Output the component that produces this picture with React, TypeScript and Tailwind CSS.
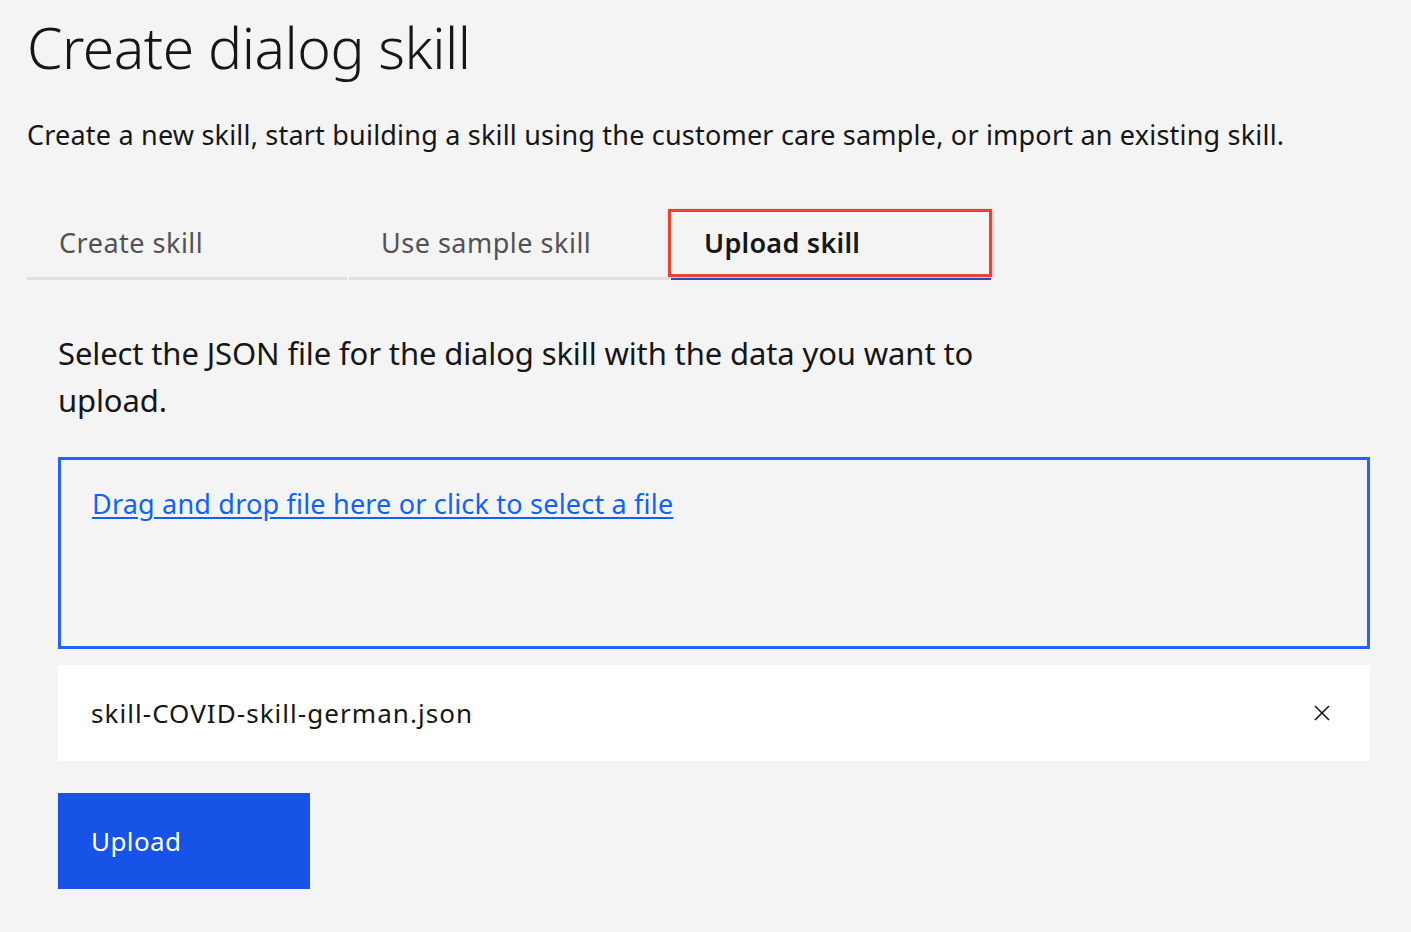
export default function App() {
  return (
    <div className="min-h-screen bg-[#f4f4f4] font-['Noto_Sans','Open_Sans',sans-serif] text-[#161616]">
      <div className="px-[27px] pt-[15px]">
        <h1 className="text-[57px] leading-[64px] font-light tracking-[-0.5px]">Create dialog skill</h1>

        <p className="mt-[38px] text-[27px] leading-[36px] tracking-[0.2px] text-[#161616]">
          Create a new skill, start building a skill using the customer care sample, or import an existing skill.
        </p>

        {/* Tabs */}
        <div className="mt-[56px] flex gap-[2px]">
          <div className="flex h-[71px] w-[320px] items-center border-b-[3px] border-[#e0e0e0] pl-[32px] text-[27px] tracking-[0.5px] text-[#525252]">
            Create skill
          </div>
          <div className="flex h-[71px] w-[320px] items-center border-b-[3px] border-[#e0e0e0] pl-[32px] text-[27px] tracking-[0.5px] text-[#525252]">
            Use sample skill
          </div>
          <div className="relative flex h-[71px] w-[320px] items-center border-b-[2px] border-[#2f4fd6] pl-[33px] text-[27px] font-semibold tracking-[0.25px] text-[#161616]">
            Upload skill
            <span className="pointer-events-none absolute top-0 right-[-1px] bottom-[1px] left-[-3px] border-[3px] border-[#e8432d] shadow-[1px_1px_3px_rgba(0,0,0,0.25)]"></span>
          </div>
        </div>

        {/* Upload panel */}
        <div className="mr-[14px] ml-[31px] pt-[50px]">
          <p className="text-[31px] leading-[47px] tracking-[-0.12px]">
            Select the JSON file for the dialog skill with the data you want to
            <br />
            upload.
          </p>

          <div className="mt-[33px] h-[192px] border-[3px] border-[#2563ff] px-[31px] pt-[26px]">
            <a href="#" className="text-[27px] leading-[36px] tracking-[0.2px] text-[#0f62fe] underline underline-offset-[3px]">
              Drag and drop file here or click to select a file
            </a>
          </div>

          <div className="mt-[16px] flex h-[96px] items-center justify-between bg-white pr-[40px] pl-[33px]">
            <span className="text-[26px] tracking-[1.05px]">skill-COVID-skill-german.json</span>
            <svg width="16" height="16" viewBox="0 0 16 16" fill="none" stroke="#161616" strokeWidth="1.6">
              <line x1="1" y1="1" x2="15" y2="15" />
              <line x1="15" y1="1" x2="1" y2="15" />
            </svg>
          </div>

          <button className="mt-[32px] flex h-[96px] w-[252px] items-center bg-[#1853e8] pl-[33px] text-[26px] tracking-[0.4px] text-white">
            Upload
          </button>
        </div>
      </div>
    </div>
  )
}
